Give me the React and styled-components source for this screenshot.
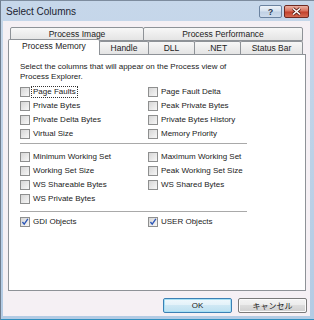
import styled, { createGlobalStyle } from "styled-components";

const Global = createGlobalStyle`
  html, body {
    margin: 0;
    padding: 0;
    width: 314px;
    height: 320px;
    overflow: hidden;
    background: #b9cfe6;
  }
  * { box-sizing: border-box; }
`;

const Window = styled.div`
  width: 314px;
  height: 320px;
  display: flex;
  flex-direction: column;
  background: linear-gradient(#c6d7ea, #b3cbe4);
  border-left: 1px solid #6f7d8e;
  border-top: 1px solid #7d8c9e;
  font-family: "Liberation Sans", Arial, sans-serif;
  color: #1a1a1a;
`;

const TitleBar = styled.div`
  height: 20px;
  display: flex;
  align-items: center;
  justify-content: space-between;
  padding: 0 5px 0 5px;
`;

const Title = styled.div`
  font-size: 10px;
  color: #1b2330;
  padding-top: 1px;
`;

const Caption = styled.div`
  display: flex;
  gap: 2px;
  margin-top: 1px;
`;

const CapBtn = styled.div`
  width: ${(p) => (p.$close ? 25 : 23)}px;
  height: 13px;
  display: flex;
  align-items: center;
  justify-content: center;
  border-radius: 2px;
  border: 1px solid ${(p) => (p.$close ? "#6f2a22" : "#6b83a0")};
  background: ${(p) =>
    p.$close
      ? "linear-gradient(#eab2a4 0%, #d9705c 45%, #c2412c 55%, #d66a52 100%)"
      : "linear-gradient(#eef3f9 0%, #d6e2ef 45%, #c0d1e5 55%, #cfdcec 100%)"};
  font-size: 9px;
  font-weight: bold;
  color: #2b3a50;
`;

const Body = styled.div`
  flex: 1;
  display: flex;
  padding: 0 4px 3px 2px;
  border-bottom: 1px solid #2f8fbf;
`;

const Client = styled.div`
  flex: 1;
  background: #f5f0f4;
  padding: 6px 4px 0 5px;
  display: flex;
  flex-direction: column;
`;

const TabRow = styled.div`
  display: flex;
  height: 14px;
  padding-left: ${(p) => (p.$back ? 2 : 0)}px;
  margin-bottom: ${(p) => (p.$back ? 0 : -1)}px;
  align-items: flex-start;
`;

const Tab = styled.div`
  position: relative;
  z-index: ${(p) => (p.$active ? 2 : 0)};
  width: ${(p) => p.$w}px;
  height: ${(p) => (p.$active ? 16 : p.$back ? 14 : 13)}px;
  margin-top: ${(p) => (p.$active ? -2 : 0)}px;
  margin-left: ${(p) => (p.$first ? 0 : -1)}px;
  border: 1px solid #8e9297;
  border-bottom: ${(p) => (p.$back ? "1px solid #8e9297" : "none")};
  background: ${(p) =>
    p.$active ? "#ffffff" : "linear-gradient(#f7f7f7, #e4e4e4)"};
  border-radius: 2px 2px 0 0;
  font-size: 8.5px;
  line-height: ${(p) => (p.$active ? 12 : 11)}px;
  padding-top: ${(p) => (p.$active ? 0 : 1)}px;
  text-align: center;
  color: #222;
  white-space: nowrap;
`;

const Panel = styled.div`
  position: relative;
  z-index: 1;
  height: 237px;
  background: #ffffff;
  border: 1px solid #8e9297;
  padding: 7px 0 0 11px;
  font-size: 8px;
  color: #222;
`;

const Intro = styled.div`
  line-height: 10px;
  margin-bottom: 3px;
`;

const Grid = styled.div`
  display: grid;
  grid-template-columns: 128px 1fr;
  grid-auto-rows: 14px;
  align-items: center;
`;

const Rule = styled.div`
  width: 227px;
  border-top: 1px solid #a9a9a9;
  border-bottom: 1px solid #ffffff;
  margin: ${(p) => p.$m};
`;

const Item = styled.label`
  display: flex;
  align-items: center;
  gap: 2px;
  white-space: nowrap;
`;

const Box = styled.span`
  width: 10px;
  height: 10px;
  flex: none;
  border: 1px solid #8e8f8f;
  background: linear-gradient(135deg, #d6d6d6, #f7f7f7);
  display: flex;
  align-items: center;
  justify-content: center;
`;

const Label = styled.span`
  padding: 0 1px;
  outline: ${(p) => (p.$focus ? "1px dotted #333" : "none")};
  line-height: 10px;
`;

const Footer = styled.div`
  display: flex;
  justify-content: flex-end;
  gap: 6px;
  padding-top: 7px;
  margin-right: -1px;
`;

const Button = styled.div`
  width: 69px;
  height: 15px;
  display: flex;
  align-items: center;
  justify-content: center;
  border-radius: 2px;
  border: 1px solid ${(p) => (p.$default ? "#3c80b4" : "#7a7a7a")};
  box-shadow: ${(p) =>
    p.$default ? "inset 0 0 0 1px #a6e0f5" : "inset 0 0 0 1px #fbfbfb"};
  background: ${(p) =>
    p.$default
      ? "linear-gradient(#f0f8fc 0%, #e2f1f9 50%, #cfe8f4 50%, #bde0f1 100%)"
      : "linear-gradient(#f4f4f4 0%, #ebebeb 50%, #dddddd 50%, #cfcfcf 100%)"};
  font-family: "Liberation Sans", "Noto Sans CJK JP", sans-serif;
  font-size: 8px;
  color: #222;
`;

const Check = () => (
  <svg width="10" height="10" viewBox="0 0 10 10">
    <path d="M1.8 5 L4 7.6 L8.6 1.2" fill="none" stroke="#2d57b8" strokeWidth="1.7" />
  </svg>
);

const Cb = ({ label, checked, focus }) => (
  <Item>
    <Box>{checked && <Check />}</Box>
    <Label $focus={focus}>{label}</Label>
  </Item>
);

const group1 = [
  ["Page Faults", "Page Fault Delta"],
  ["Private Bytes", "Peak Private Bytes"],
  ["Private Delta Bytes", "Private Bytes History"],
  ["Virtual Size", "Memory Priority"],
];

const group2 = [
  ["Minimum Working Set", "Maximum Working Set"],
  ["Working Set Size", "Peak Working Set Size"],
  ["WS Shareable Bytes", "WS Shared Bytes"],
  ["WS Private Bytes", null],
];

export default function App() {
  return (
    <>
      <Global />
      <Window>
        <TitleBar>
          <Title>Select Columns</Title>
          <Caption>
            <CapBtn>?</CapBtn>
            <CapBtn $close>
              <svg width="11" height="9" viewBox="0 0 11 9">
                <path d="M2 1.5 L9 7.5 M9 1.5 L2 7.5" stroke="#5a1e16" strokeWidth="3" />
                <path d="M2 1.5 L9 7.5 M9 1.5 L2 7.5" stroke="#ffffff" strokeWidth="1.6" />
              </svg>
            </CapBtn>
          </Caption>
        </TitleBar>
        <Body>
          <Client>
            <TabRow $back>
              <Tab $back $first $w={134}>Process Image</Tab>
              <Tab $back $w={160}>Process Performance</Tab>
            </TabRow>
            <TabRow>
              <Tab $active $first $w={92}>Process Memory</Tab>
              <Tab $w={50}>Handle</Tab>
              <Tab $w={47}>DLL</Tab>
              <Tab $w={47}>.NET</Tab>
              <Tab $w={63}>Status Bar</Tab>
            </TabRow>
            <Panel>
              <Intro>
                Select the columns that will appear on the Process view of
                <br />
                Process Explorer.
              </Intro>
              <Grid>
                {group1.map(([a, b], i) => [
                  <Cb key={a} label={a} focus={i === 0} />,
                  <Cb key={b} label={b} />,
                ])}
              </Grid>
              <Rule $m="2px 0 5px" />
              <Grid>
                {group2.map(([a, b]) => [
                  <Cb key={a} label={a} />,
                  b ? <Cb key={b} label={b} /> : <span key="empty" />,
                ])}
              </Grid>
              <Rule $m="5px 0 2px" />
              <Grid>
                <Cb label="GDI Objects" checked />
                <Cb label="USER Objects" checked />
              </Grid>
            </Panel>
            <Footer>
              <Button $default>OK</Button>
              <Button>キャンセル</Button>
            </Footer>
          </Client>
        </Body>
      </Window>
    </>
  );
}
